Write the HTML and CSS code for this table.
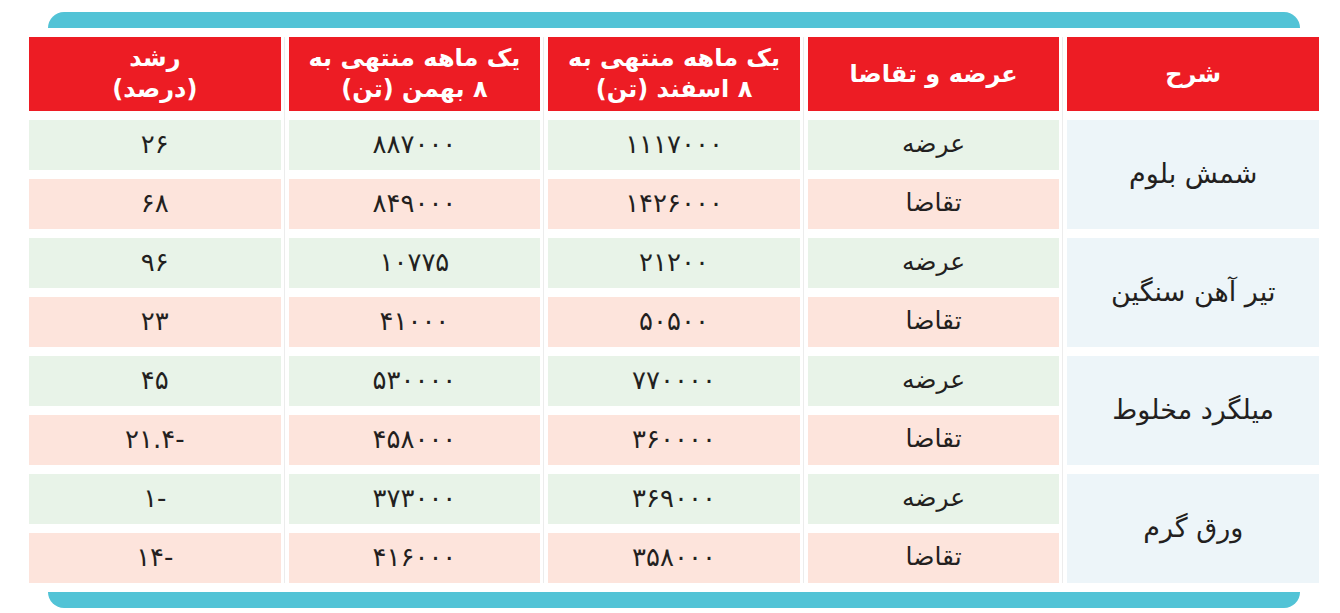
FILE: index.html
```html
<!DOCTYPE html>
<html lang="fa">
<head>
<meta charset="utf-8">
<title>عرضه و تقاضا</title>
<link rel="stylesheet" href="styles.css">
</head>
<body>
<div class="frame">
  <div class="bar bar-top"></div>
  <div class="table" dir="rtl">
    <div class="cell head">شرح</div>
    <div class="cell head">عرضه و تقاضا</div>
    <div class="cell head">یک ماهه منتهی به<br>۸ اسفند (تن)</div>
    <div class="cell head">یک ماهه منتهی به<br>۸ بهمن (تن)</div>
    <div class="cell head">رشد<br>(درصد)</div>

    <div class="cell name">شمش بلوم</div>
    <div class="cell sup">عرضه</div><div class="cell sup num">۱۱۱۷۰۰۰</div><div class="cell sup num">۸۸۷۰۰۰</div><div class="cell sup num">۲۶</div>
    <div class="cell dem">تقاضا</div><div class="cell dem num">۱۴۲۶۰۰۰</div><div class="cell dem num">۸۴۹۰۰۰</div><div class="cell dem num">۶۸</div>

    <div class="cell name">تیر آهن سنگین</div>
    <div class="cell sup">عرضه</div><div class="cell sup num">۲۱۲۰۰</div><div class="cell sup num">۱۰۷۷۵</div><div class="cell sup num">۹۶</div>
    <div class="cell dem">تقاضا</div><div class="cell dem num">۵۰۵۰۰</div><div class="cell dem num">۴۱۰۰۰</div><div class="cell dem num">۲۳</div>

    <div class="cell name">میلگرد مخلوط</div>
    <div class="cell sup">عرضه</div><div class="cell sup num">۷۷۰۰۰۰</div><div class="cell sup num">۵۳۰۰۰۰</div><div class="cell sup num">۴۵</div>
    <div class="cell dem">تقاضا</div><div class="cell dem num">۳۶۰۰۰۰</div><div class="cell dem num">۴۵۸۰۰۰</div><div class="cell dem num">-۲۱.۴</div>

    <div class="cell name">ورق گرم</div>
    <div class="cell sup">عرضه</div><div class="cell sup num">۳۶۹۰۰۰</div><div class="cell sup num">۳۷۳۰۰۰</div><div class="cell sup num">-۱</div>
    <div class="cell dem">تقاضا</div><div class="cell dem num">۳۵۸۰۰۰</div><div class="cell dem num">۴۱۶۰۰۰</div><div class="cell dem num">-۱۴</div>
  </div>
  <div class="bar bar-bottom"></div>
</div>
</body>
</html>
```
FILE: styles.css
```css
html, body {
  margin: 0;
  padding: 0;
  background: #ffffff;
}
body {
  width: 1340px;
  height: 613px;
  overflow: hidden;
  font-family: "DejaVu Sans", "Noto Sans", sans-serif;
  color: #231f20;
}
.frame {
  padding-top: 12px;
  display: flex;
  flex-direction: column;
}
.bar {
  height: 16px;
  background: #52c3d6;
  margin-left: 48px;
  width: 1252px;
}
.bar-top {
  border-radius: 24px 24px 0 0;
}
.bar-bottom {
  border-radius: 0 0 24px 24px;
  margin-top: 9px;
}
.table {
  margin-top: 9px;
  margin-left: 29px;
  width: 1290px;
  display: grid;
  grid-template-columns: repeat(5, 1fr);
  grid-template-rows: 74px repeat(8, 50px);
  column-gap: 8px;
  row-gap: 9px;
  background-image:
    linear-gradient(#ececec, #ececec),
    linear-gradient(#ececec, #ececec),
    linear-gradient(#ececec, #ececec),
    linear-gradient(#ececec, #ececec);
  background-size: 1px 100%;
  background-repeat: no-repeat;
  background-position: 255px 0, 514px 0, 774px 0, 1033px 0;
}
.cell {
  display: flex;
  align-items: center;
  justify-content: center;
  text-align: center;
  font-size: 25px;
  line-height: 1;
  padding-bottom: 3px;
}
.num {
  font-size: 26px;
}
.head {
  background: #ed1c24;
  color: #ffffff;
  font-weight: bold;
  font-size: 24px;
  line-height: 31px;
  padding-bottom: 0;
}
.name {
  grid-row: span 2;
  background: #edf5f9;
  font-size: 27px;
}
.sup {
  background: #e8f3e8;
}
.dem {
  background: #fde4dc;
}
```
